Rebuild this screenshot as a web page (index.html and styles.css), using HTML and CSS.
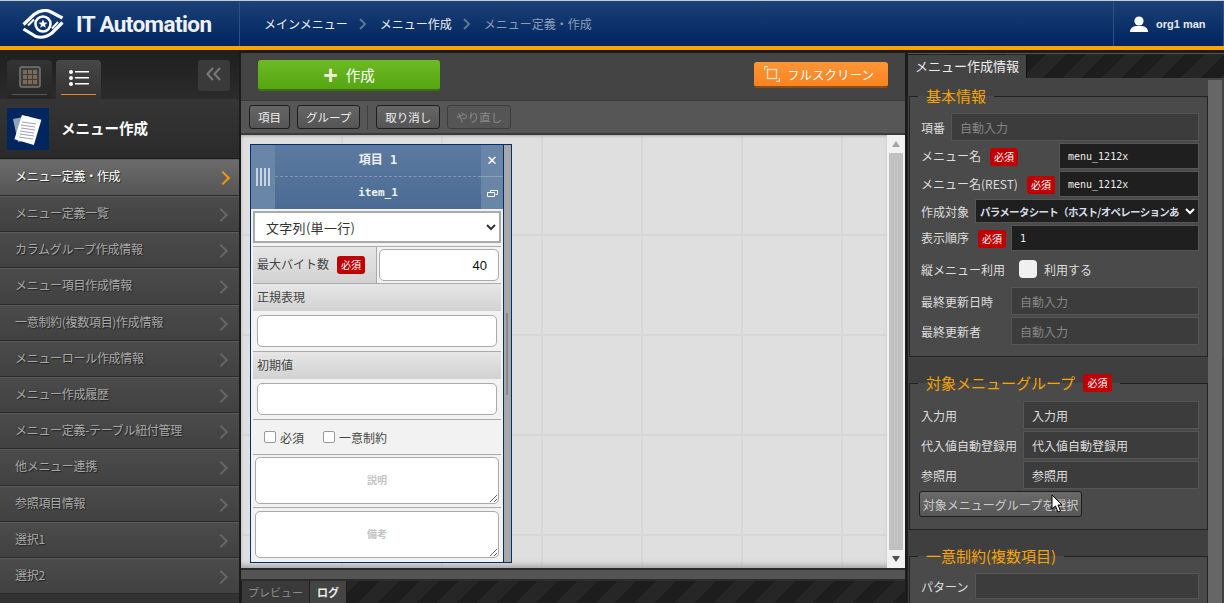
FILE: index.html
```html
<!DOCTYPE html>
<html lang="ja">
<head>
    <meta charset="UTF-8">
    <title>メニュー定義・作成</title>
    <link rel="stylesheet" href="styles.css">
</head>
<body>
<header class="top">
    <div class="brand">
        <svg class="logo" viewBox="0 0 42 30" width="42" height="30" fill="none" stroke="#fff">
            <path d="M1.500 15.500L12 5.500Q20 -.5 28 2.500L40.500 9" stroke-width="3.200"/>
            <path d="M40.500 13.500L30 24Q22 30 14 27.500L1.500 20" stroke-width="3.200"/>
            <path d="M6 16.500L12 10.500M36 13L30 19.500" stroke-width="2"/>
            <circle cx="21" cy="15" r="7.500" stroke-width="2.600"/>
            <path d="M21 10.500l1.300 3 3.200.2-2.500 2 .8 3.100-2.800-1.700-2.800 1.700.8-3.100-2.500-2 3.200-.2z" fill="#fff" stroke="none"/>
        </svg>
        <span class="brand-name">IT Automation</span>
    </div>
    <nav class="crumbs">
        <a>メインメニュー</a>
        <svg class="crumb-sep" viewBox="0 0 8 12" width="8" height="12"><path d="M1 1l5 5-5 5" fill="none" stroke="#5f7a9c" stroke-width="1.8"/></svg>
        <a>メニュー作成</a>
        <svg class="crumb-sep" viewBox="0 0 8 12" width="8" height="12"><path d="M1 1l5 5-5 5" fill="none" stroke="#5f7a9c" stroke-width="1.8"/></svg>
        <a class="here">メニュー定義・作成</a>
    </nav>
    <div class="user">
        <svg viewBox="0 0 18 16" width="18" height="16" fill="#fff"><circle cx="9" cy="5" r="4.6"/><path d="M0 16c0-4 3-5.500 6-6h6c3 .5 6 2 6 6z"/></svg>
        <span>org1 man</span>
    </div>
</header>

<div class="app">
    <aside class="side">
        <div class="side-tabs">
            <div class="side-tab">
                <svg viewBox="0 0 22 22" width="22" height="22"><rect x="1" y="1" width="20" height="20" rx="2" fill="#3c3c3c" stroke="#777" stroke-width="1.500"/><path d="M4 4h4v4H4zM9 4h4v4H9zM14 4h4v4h-4zM4 9h4v4H4zM9 9h4v4H9zM14 9h4v4h-4zM4 14h4v4H4zM9 14h4v4H9zM14 14h4v4h-4z" fill="#7b6a58"/></svg>
            </div>
            <div class="side-tab is-on">
                <svg viewBox="0 0 20 16" width="20" height="16" fill="#fff"><circle cx="2" cy="2" r="2"/><circle cx="2" cy="8" r="2"/><circle cx="2" cy="14" r="2"/><path d="M6 1h14v1.500H6zM6 7h14v1.500H6zM6 13h14v1.500H6z"/></svg>
            </div>
            <button class="collapse">
                <svg viewBox="0 0 16 14" width="16" height="14" fill="none" stroke="#777" stroke-width="2.200"><path d="M7 1L1.500 7 7 13M14 1L8.500 7 14 13"/></svg>
            </button>
        </div>
        <div class="side-title">
            <div class="side-icon">
                <svg viewBox="0 0 42 42" width="42" height="42">
                    <path d="M6 11l16-3 5 23-16 3z" fill="#8fa3bd"/>
                    <path d="M13 8l20 2-4 26-20-3z" fill="#fff" transform="rotate(8 21 21)"/>
                    <path d="M15 14l14 2M14 17l14 2M14 20l14 2M13 23l14 2M13 26l14 2M12 29l14 2" stroke="#7f8da3" stroke-width=".8"/>
                </svg>
            </div>
            <h1>メニュー作成</h1>
        </div>
        <ul class="menu">
            <li class="is-on">メニュー定義・作成</li>
            <li>メニュー定義一覧</li>
            <li>カラムグループ作成情報</li>
            <li>メニュー項目作成情報</li>
            <li>一意制約(複数項目)作成情報</li>
            <li>メニューロール作成情報</li>
            <li>メニュー作成履歴</li>
            <li>メニュー定義-テーブル紐付管理</li>
            <li>他メニュー連携</li>
            <li>参照項目情報</li>
            <li>選択1</li>
            <li>選択2</li>
        </ul>
    </aside>

    <main class="center">
        <div class="actions">
            <button class="btn-create"><span class="plus">+</span>作成</button>
            <button class="btn-full">
                <svg viewBox="0 0 16 16" width="16" height="16" fill="none" stroke="#f4e2d0" stroke-width="1.300"><rect x="3.500" y="3.500" width="9" height="9"/><path d="M0.500 4V.5H4M12 15.500h3.500V12"/></svg>
                フルスクリーン
            </button>
        </div>
        <div class="tools">
            <button class="tool">項目</button>
            <button class="tool">グループ</button>
            <span class="tool-sep"></span>
            <button class="tool">取り消し</button>
            <button class="tool" disabled>やり直し</button>
        </div>
        <div class="canvas">
            <div class="canvas-area">
                <section class="item">
                    <div class="item-body">
                        <div class="item-head">
                            <div class="grip"><i></i><i></i><i></i><i></i></div>
                            <div class="item-names">
                                <div class="item-name">項目 1</div>
                                <div class="item-name">item_1</div>
                            </div>
                            <div class="item-ctl">
                                <div class="ctl">✕</div>
                                <div class="ctl">
                                    <svg viewBox="0 0 11 7" width="11" height="7" fill="none" stroke="#fff"><path d="M3.500 2.500V.5h7v4h-2M.5 2.500h7v4h-7z"/></svg>
                                </div>
                            </div>
                        </div>
                        <div class="type-wrap">
                            <select class="type"><option>文字列(単一行)</option></select>
                        </div>
                        <div class="byte-row">
                            <div class="byte-label">最大バイト数<b class="req">必須</b></div>
                            <div class="byte-field"><input class="txt num" value="40"></div>
                        </div>
                        <div class="sub-head">正規表現</div>
                        <div class="sub-body"><input class="txt"></div>
                        <div class="sub-head">初期値</div>
                        <div class="sub-body"><input class="txt"></div>
                        <div class="checks">
                            <label><span class="box"></span>必須</label>
                            <label><span class="box"></span>一意制約</label>
                        </div>
                        <div class="note"><textarea placeholder="説明"></textarea></div>
                        <div class="note"><textarea placeholder="備考"></textarea></div>
                    </div>
                    <div class="item-strip"><span></span></div>
                </section>
            </div>
            <div class="vbar">
                <span class="arrow up"></span>
                <span class="thumb"></span>
                <span class="arrow down"></span>
            </div>
        </div>
        <div class="split"></div>
        <div class="log-tabs">
            <span class="log-tab">プレビュー</span>
            <span class="log-tab is-on">ログ</span>
        </div>
    </main>

    <aside class="info">
        <div class="info-tabs"><span class="info-tab">メニュー作成情報</span></div>
        <div class="info-wrap">
            <div class="info-scroll">
                <fieldset class="sec sec-basic">
                    <legend>基本情報</legend>
                    <div class="row"><span>項番</span><div class="val w248 ph">自動入力</div></div>
                    <div class="row r2"><span>メニュー名<b class="req">必須</b></span><div class="val w140 in">menu_1212x</div></div>
                    <div class="row r2"><span>メニュー名(REST)<b class="req">必須</b></span><div class="val w140 in">menu_1212x</div></div>
                    <div class="row r3"><span>作成対象</span><div class="val w224 in pick"><span>パラメータシート（ホスト/オペレーションあ</span><svg viewBox="0 0 10 7" width="10" height="7" fill="none" stroke="#fff" stroke-width="2"><path d="M1 1l4 4 4-4"/></svg></div></div>
                    <div class="row r2"><span>表示順序<b class="req">必須</b></span><div class="val w188 in">1</div></div>
                    <div class="row r-check"><span>縦メニュー利用</span><div class="use"><span class="use-box"></span>利用する</div></div>
                    <div class="row"><span>最終更新日時</span><div class="val w188 ph">自動入力</div></div>
                    <div class="row"><span>最終更新者</span><div class="val w188 ph">自動入力</div></div>
                </fieldset>
                <fieldset class="sec sec-group">
                    <legend>対象メニューグループ<b class="req">必須</b></legend>
                    <div class="row"><span>入力用</span><div class="val w176 ro">入力用</div></div>
                    <div class="row"><span>代入値自動登録用</span><div class="val w176 ro">代入値自動登録用</div></div>
                    <div class="row"><span>参照用</span><div class="val w176 ro">参照用</div></div>
                    <button class="pick-btn">対象メニューグループを選択</button>
                </fieldset>
                <fieldset class="sec sec-uniq">
                    <legend>一意制約(複数項目)</legend>
                    <div class="row r2"><span>パターン</span><div class="val w224 ro"></div></div>
                </fieldset>
            </div>
            <div class="info-bar"></div>
        </div>
    </aside>
</div>

<svg class="cursor" viewBox="0 0 12 19" width="12" height="19"><path d="M1 1v14l3.500-3 2.500 6 2.500-1-2.500-6H11z" fill="#fff" stroke="#000"/></svg>
</body>
</html>
```

FILE: styles.css
```css
* { box-sizing: border-box; }

html, body {
    margin: 0;
    height: 603px;
    overflow: hidden;
}

body {
    background: #1b1b1b;
    font-family: "Noto Sans CJK JP", "Noto Sans", sans-serif;
    font-size: 12px;
    color: #ddd;
}

button, input, select, textarea {
    font-family: inherit;
    margin: 0;
}

/* header */
.top {
    height: 50px;
    display: flex;
    align-items: stretch;
    border-top: 1px solid #c8ccd2;
    border-bottom: 4px solid #f9a400;
    background: linear-gradient(#1b4176, #00255f);
}

.brand {
    width: 240px;
    padding-left: 22px;
    display: flex;
    align-items: center;
    border-right: 1px solid #2c5285;
}

.logo { flex: none; }

.brand-name {
    margin-left: 12px;
    font-family: "Roboto", sans-serif;
    font-size: 22.5px;
    font-weight: 700;
    color: #eef2f6;
    letter-spacing: -.6px;
    white-space: nowrap;
}

.crumbs {
    flex: 1;
    padding-left: 24px;
    display: flex;
    align-items: center;
    color: #eef2f6;
}

.crumb-sep { margin: 0 13px 0 11px; }

.crumbs .here { color: #8b9db8; }

.user {
    width: 111px;
    padding-left: 16px;
    display: flex;
    align-items: center;
    gap: 8px;
    border-left: 1px solid #2c5285;
    border-right: 1px solid #2c5285;
    font-family: "Liberation Sans", sans-serif;
    font-size: 11px;
    font-weight: 700;
    color: #e6e9ee;
}

.app {
    height: 553px;
    display: flex;
}

/* left menu */
.side {
    width: 239px;
    flex: none;
    background: #333;
    overflow: hidden;
}

.side-tabs {
    height: 49px;
    padding: 10px 9px 0 7px;
    display: flex;
    gap: 4px;
    background: linear-gradient(#1f1f1f, #2b2b2b);
}

.side-tab {
    width: 45px;
    height: 39px;
    padding-top: 6px;
    display: flex;
    justify-content: center;
    border-radius: 4px 4px 0 0;
    background: linear-gradient(#333, #262626);
    position: relative;
}

.side-tab::after {
    content: "";
    position: absolute;
    left: 5px;
    right: 5px;
    bottom: 4px;
    height: 1px;
    background: #555;
}

.side-tab.is-on {
    padding-top: 10px;
    background: linear-gradient(#474747, #333);
}

.side-tab.is-on::after { background: #f08a20; }

.collapse {
    width: 32px;
    height: 31px;
    margin-left: auto;
    padding: 0;
    border: 0;
    border-radius: 3px;
    background: #3a3a3a;
}

.side-title {
    height: 60px;
    padding: 9px 0 0 7px;
    display: flex;
    gap: 12px;
    background: linear-gradient(#353535, #2a2a2a);
    border-bottom: 1px solid #1b1b1b;
}

.side-icon {
    width: 42px;
    height: 42px;
    background: #00265f;
}

.side-title h1 {
    margin: 0;
    line-height: 40px;
    font-size: 14.5px;
    font-weight: 700;
    color: #fff;
}

.menu {
    margin: 0;
    padding: 0;
    list-style: none;
}

.menu li {
    height: 36.2px;
    padding-left: 15px;
    line-height: 32px;
    color: #a8a8a8;
    letter-spacing: -.3px;
    text-shadow: 1px 1px 1px #222;
    background: linear-gradient(#4b4b4b, #414141);
    border-top: 1px solid #5c5c5c;
    border-bottom: 1px solid #2b2b2b;
    position: relative;
}

.menu li::after {
    content: "";
    position: absolute;
    right: 13px;
    top: 13px;
    width: 8px;
    height: 8px;
    border-top: 2px solid #666;
    border-right: 2px solid #666;
    transform: rotate(45deg);
}

.menu li.is-on {
    height: 37px;
    color: #fff;
    background: linear-gradient(#6c6c6c, #555);
}

.menu li.is-on::after {
    right: 11px;
    border-color: #f9960c;
}

/* center column */
.center {
    width: 664px;
    flex: none;
    margin: 3px 0 0 2px;
    background: #444;
    display: flex;
    flex-direction: column;
}

.actions {
    height: 47px;
    padding: 7px 17px 0 17px;
    display: flex;
    align-items: flex-start;
    justify-content: space-between;
}

.btn-create {
    width: 182px;
    height: 31px;
    padding: 0;
    border: 0;
    border-radius: 3px;
    border-bottom: 2px solid #3c7310;
    background: linear-gradient(#6dba24, #55a612);
    color: #fff;
    font-size: 14.5px;
}

.plus {
    margin-right: 8px;
    font-family: "Liberation Sans", sans-serif;
    font-size: 25px;
    font-weight: 700;
    line-height: 20px;
    vertical-align: -3px;
    color: #f3ecd8;
}

.btn-full {
    width: 134px;
    height: 26px;
    margin-top: 2px;
    padding: 0 0 0 10px;
    display: flex;
    align-items: center;
    gap: 7px;
    border: 0;
    border-radius: 3px;
    border-bottom: 2px solid #8f4d18;
    background: linear-gradient(#ff9535, #f98321);
    color: #fff;
    font-size: 12.5px;
    white-space: nowrap;
}

.tools {
    height: 35px;
    padding: 4px 8px 0;
    display: flex;
    align-items: flex-start;
    gap: 7px;
    background: #565656;
    border-top: 1px solid #3a3a3a;
    border-bottom: 2px solid #3a3a3a;
}

.tool {
    height: 24px;
    padding: 0 8px;
    border: 1px solid #1e1e1e;
    border-radius: 3px;
    background: linear-gradient(#666, #555);
    color: #eee;
    font-size: 11.5px;
    white-space: nowrap;
}

.tool:disabled {
    border-color: #3d3d3d;
    color: #8a8a8a;
    background: #555;
}

.tool-sep {
    width: 1px;
    height: 24px;
    margin-right: 1px;
    background: #3e3e3e;
}

.canvas {
    height: 435px;
    display: flex;
    border-bottom: 2px solid #2c2c2c;
}

.canvas-area {
    flex: 1;
    padding: 9px 0 0 9px;
    background-color: #dfdfdf;
    background-image:
        linear-gradient(#d7d7d7 2px, transparent 2px),
        linear-gradient(90deg, #d7d7d7 2px, transparent 2px);
    background-size: 100px 100px;
    background-position: 100px 99px;
    box-shadow: inset 0 -6px 6px -4px #999, inset 0 3px 3px -2px #aaa;
}

.vbar {
    width: 18px;
    padding: 0 2px;
    display: flex;
    flex-direction: column;
    align-items: center;
    background: #f1f1f1;
}

.thumb {
    width: 14px;
    height: 397px;
    background: #c1c1c1;
}

.arrow {
    height: 17px;
    width: 0;
    border-left: 4px solid transparent;
    border-right: 4px solid transparent;
}

.arrow.up {
    border-bottom: 6px solid #a3a3a3;
    height: 0;
    margin: 6px 0 6px;
}

.arrow.down {
    border-top: 6px solid #505050;
    height: 0;
    margin-top: 6px;
}

.split {
    height: 11px;
    background: #545454;
    border-bottom: 2px solid #2c2c2c;
}

.log-tabs {
    flex: 1;
    padding-left: 1px;
    display: flex;
    background: repeating-linear-gradient(135deg, #1d1d1d 0 14px, #262626 14px 28px);
}

.log-tab {
    width: 68px;
    text-align: center;
    line-height: 22px;
    font-size: 11px;
    background: #3a3a3a;
    color: #8d8d8d;
    border-right: 1px solid #1d1d1d;
}

.log-tab.is-on {
    width: 37px;
    background: #444;
    color: #eee;
    font-weight: 700;
}

/* item card on the canvas */
.item {
    width: 262px;
    height: 419px;
    display: flex;
    background: #f2f2f2;
    border: 1px solid #003070;
}

.item-body {
    width: 252px;
    flex: none;
}

.item-strip {
    flex: 1;
    border-left: 1px solid #003070;
    background: #a8a8a8;
    padding-top: 168px;
}

.item-strip span {
    display: block;
    width: 2px;
    height: 82px;
    margin-left: 2px;
    background: #888;
}

.item-head {
    height: 64px;
    display: flex;
    color: #fff;
    background: linear-gradient(#5c7a9f, #4c6b94);
}

.grip {
    width: 24px;
    padding-top: 23px;
    display: flex;
    justify-content: center;
    gap: 2px;
    background: #6985a8;
}

.grip i {
    width: 2px;
    height: 18px;
    background: #c8d4e2;
}

.item-names { flex: 1; }

.item-name {
    height: 32px;
    line-height: 31px;
    text-align: center;
    font-family: "DejaVu Sans Mono", "Noto Sans CJK JP", monospace;
    font-size: 11px;
    font-weight: 700;
    color: #eef2f6;
}

.item-name:first-child {
    border-bottom: 1px dashed #8097b4;
    font-size: 12px;
}

.item-ctl {
    width: 22px;
    background: #6985a8;
}

.ctl {
    height: 32px;
    display: flex;
    align-items: center;
    justify-content: center;
    font-family: "DejaVu Sans", sans-serif;
    font-size: 13px;
    font-weight: 700;
}

.ctl:first-child { border-bottom: 1px solid #86a0bd; }

.type-wrap { height: 37px; padding: 2px; }

.type {
    width: 248px;
    height: 32px;
    padding-left: 7px;
    border: 2px solid #aaa;
    border-radius: 0;
    background-color: #fff;
    color: #333;
    font-size: 13px;
    letter-spacing: .3px;
}

.byte-row {
    height: 38px;
    display: flex;
    border-top: 1px solid #aaa;
    border-bottom: 1px solid #aaa;
    margin: 0 2px;
}

.byte-label {
    width: 124px;
    padding-left: 4px;
    line-height: 34px;
    font-size: 12px;
    color: #444;
    background: linear-gradient(#e6e6e6, #d2d2d2);
    border-right: 1px solid #aaa;
    white-space: nowrap;
}

.byte-field { flex: 1; padding: 2px 2px 0 2px; }

.txt {
    display: block;
    width: 100%;
    height: 32px;
    padding: 0 10px;
    border: 1px solid #aaa;
    border-radius: 5px;
    background: #fff;
    font-size: 13px;
    color: #222;
}

.num {
    text-align: right;
    padding-right: 11px;
    font-family: "Liberation Sans", sans-serif;
    font-size: 13px;
    color: #111;
}

.sub-head {
    height: 27px;
    margin: 0 2px;
    padding-left: 4px;
    line-height: 25px;
    font-size: 12px;
    color: #444;
    background: linear-gradient(#e6e6e6, #d2d2d2);
}

.sub-body {
    height: 41px;
    margin: 0 2px;
    padding: 4px 4px 0;
    border-bottom: 1px solid #aaa;
}

.checks {
    height: 35px;
    margin: 0 2px;
    padding-left: 11px;
    display: flex;
    align-items: center;
    gap: 19px;
    font-size: 12px;
    color: #444;
    border-bottom: 1px solid #aaa;
}

.checks label {
    display: flex;
    align-items: center;
    gap: 4px;
}

.box {
    width: 12px;
    height: 12px;
    border: 1px solid #999;
    border-radius: 2px;
    background: #fff;
}

.note {
    margin: 0 2px;
    padding: 2px 2px 0;
    height: 53px;
    border-bottom: 1px solid #aaa;
}

.note + .note { padding-top: 3px; }

.note:last-child { border-bottom: 0; }

.note textarea {
    display: block;
    width: 100%;
    height: 47px;
    padding-top: 14px;
    border: 1px solid #aaa;
    border-radius: 5px;
    background: #fff;
    text-align: center;
    font-size: 10px;
    font-weight: 700;
    resize: vertical;
}

.note textarea::placeholder { color: #c4c4c4; }

/* right column */
.info {
    flex: 1;
    margin: 3px 0 0 2px;
    border-left: 1px solid #1f1f1f;
    background: #3f3f3f;
    overflow: hidden;
    display: flex;
    flex-direction: column;
}

.info-tabs {
    height: 25px;
    background: repeating-linear-gradient(135deg, #1d1d1d 0 14px, #262626 14px 28px);
    border-top: 1px solid #555;
    display: flex;
    align-items: flex-end;
}

.info-tab {
    width: 119px;
    height: 23px;
    padding-left: 7px;
    line-height: 22px;
    font-size: 13px;
    color: #eee;
    background: #444;
    border-right: 1px solid #111;
    white-space: nowrap;
}

.info-wrap {
    flex: 1;
    display: flex;
    min-height: 0;
    padding-top: 2px;
    background: linear-gradient(#444 0 280px, #3f3f3f 280px);
}

.info-scroll {
    width: 300px;
    flex: none;
    padding-left: 1px;
}

.info-bar {
    width: 14px;
    background: #666;
}

.sec {
    position: relative;
    margin: 0;
    padding: 0 8px 0 11px;
    border: 1px solid #222;
    background: #4a4a4a;
}

.sec legend {
    margin-left: -3px;
    padding: 0 8px;
    height: 20px;
    line-height: 18px;
    font-size: 15px;
    color: #f9a400;
    display: flex;
    align-items: center;
}

.sec-basic { height: 271px; padding-top: 7px; margin-top: 6px; }
.sec-group { height: 157px; margin-top: 16px; padding-top: 8px; }
.sec-uniq { height: 60px; margin-top: 16px; padding-top: 7px; }

.row {
    height: 28px;
    margin-bottom: 2px;
    display: flex;
    align-items: center;
    justify-content: space-between;
    white-space: nowrap;
    color: #ddd;
}

.r2 { height: 26px; }

.r3 { height: 24px; }

.r-check { height: 32px; }

.val {
    height: 100%;
    padding-left: 8px;
    display: flex;
    align-items: center;
    border: 1px solid #555;
}

.w248 { width: 248px; }
.w224 { width: 224px; }
.w188 { width: 188px; }
.w176 { width: 176px; }
.w140 { width: 140px; }

.ph { background: #3c3c3c; color: #858585; }

.ro { background: #3c3c3c; color: #ddd; }

.in {
    background: #1f1f1f;
    color: #eee;
    font-family: "DejaVu Sans Mono", monospace;
    font-size: 10px;
}

.pick {
    padding-left: 4px;
    padding-right: 3px;
    justify-content: space-between;
    font-family: "Noto Sans CJK JP", sans-serif;
    font-size: 10.5px;
    font-weight: 700;
    letter-spacing: -.7px;
    color: #d4dde8;
}

.pick svg { flex: none; }

.use {
    width: 180px;
    display: flex;
    align-items: center;
    gap: 7px;
    color: #ddd;
}

.use-box {
    width: 18px;
    height: 18px;
    border-radius: 4px;
    background: #f0f0f0;
}

.req {
    display: inline-block;
    width: 28px;
    height: 18px;
    margin-left: 9px;
    border-radius: 3px;
    background: #c00000;
    color: #fff;
    text-align: center;
    line-height: 17px;
    font-size: 10px;
    font-weight: 400;
    vertical-align: 0;
}

.byte-label .req { margin-left: 8px; vertical-align: 0; }

.sec legend .req { margin-left: 8px; width: 29px; }

.pick-btn {
    display: block;
    width: 163px;
    height: 26px;
    margin: 2px 0 0 -2px;
    padding: 0;
    border: 1px solid #1e1e1e;
    border-radius: 3px;
    background: linear-gradient(#6a6a6a, #565656);
    color: #ccc;
    font-size: 12px;
    white-space: nowrap;
}

.cursor {
    position: absolute;
    left: 1051px;
    top: 494px;
}
```
